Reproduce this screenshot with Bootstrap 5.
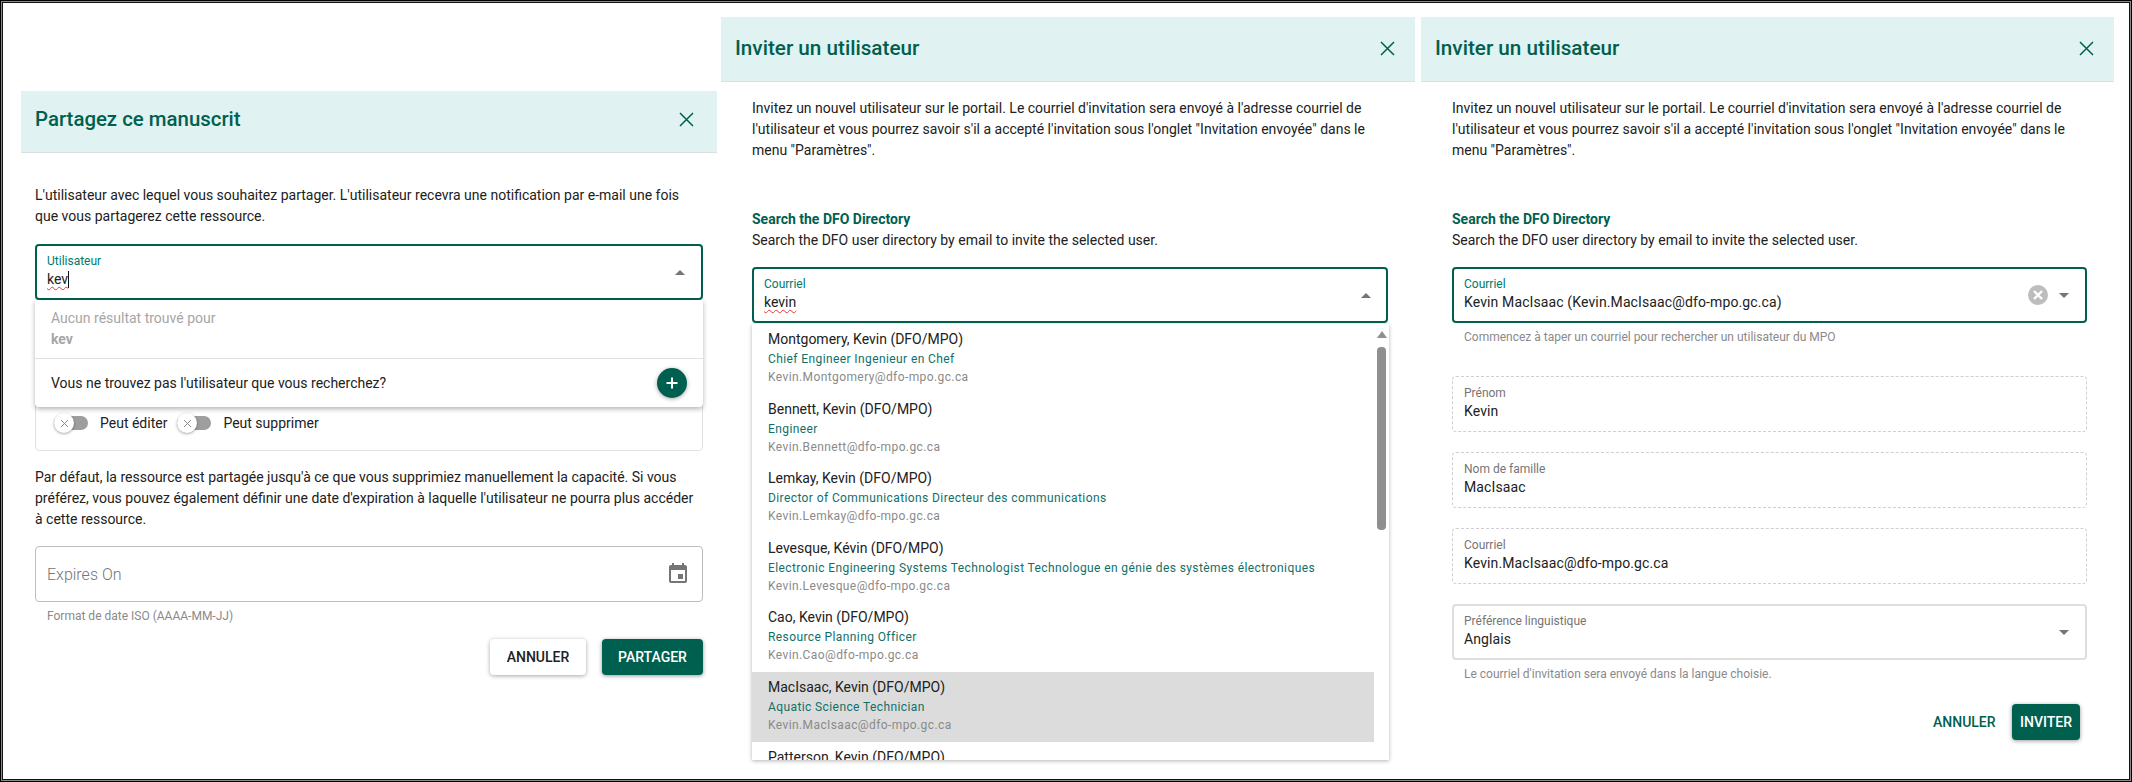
<!DOCTYPE html>
<html lang="fr">
<head>
<meta charset="utf-8">
<title>Partage et invitation</title>
<link rel="stylesheet" href="https://cdn.jsdelivr.net/npm/bootstrap@5.3.0/dist/css/bootstrap.min.css">
<style>
html,body{height:100%;}
body{margin:0;background:#fff;font-family:Roboto,"Liberation Sans",sans-serif;font-size:14px;line-height:21px;color:#212121;overflow:hidden;}
.sheet{height:782px;width:2132px;box-shadow:inset 0 0 0 1px #000,inset 0 0 0 2px #8a8a8a,inset 0 0 0 3px #111;}
.panel{flex:none;}
.panel-a{width:696px;margin:91px 0 0 21px;}
.panel-b{width:694px;margin:17px 0 0 4px;}
.panel-c{width:693px;margin:17px 0 0 6px;}
.dlg-head{background:#e0f2f1;border-bottom:1px solid #dcdfdf;color:#00604f;font-size:20.7px;line-height:24px;font-weight:500;padding:0 20px 0 14px;}
.panel-a .dlg-head{height:62px;padding:0 23px 5px 14px;font-size:20.4px;}
.panel-b .dlg-head,.panel-c .dlg-head{height:65px;padding-bottom:2px;}
.dlg-head svg{width:15px;height:15px;stroke:#00604f;stroke-width:1.5;fill:none;}
.dlg-body{padding:0 14px;position:relative;}
.panel-b .dlg-body,.panel-c .dlg-body{padding:0 27px 0 31px;}
.intro{margin:0;}
.panel-a .intro.one{padding-top:32px;margin-bottom:17px;}
.panel-b .intro.one,.panel-c .intro.one{padding-top:16px;margin-bottom:48px;}
.dir-title{color:#00604f;font-weight:700;margin:0;}
.dir-sub{margin:0 0 16px;}
.fld{height:56px;border:1px solid #bdbdbd;border-radius:4px;padding:8px 11px 0;position:relative;background:#fff;}
.fld.live{border:2px solid #00604f;padding:7px 10px 0;}
.fld.ro{border:1px dashed #cfcfcf;}
.fld.sel{border:2px solid #dedede;padding:7px 10px 0;}
.fld-label{display:block;font-size:12px;line-height:16px;color:#757575;}
.fld.live .fld-label{color:#00796b;}
.fld-value{display:block;line-height:20px;color:#212121;}
.panel-c .fld-value{letter-spacing:.12px;}
.spell{text-decoration:underline wavy #e53935 1px;text-underline-offset:2px;}
.caret-mark{display:inline-block;width:1px;height:17px;background:#111;vertical-align:-4px;}
.arrow-up,.arrow-down{width:0;height:0;border-left:5px solid transparent;border-right:5px solid transparent;}
.arrow-up{border-bottom:5px solid #757575;}
.arrow-down{border-top:5px solid #757575;}
.fld-tools{position:absolute;top:0;bottom:0;right:16px;gap:11px;}
.panel-b .fld-tools{right:15px;}
.hint{font-size:12px;line-height:16px;color:#8a8a8a;padding-left:12px;}
.rights{height:141px;border:1px solid #e0e0e0;border-radius:4px;margin-top:10px;padding:0 18px 16px;}
.tgl{width:34px;height:14px;border-radius:7px;background:#9e9e9e;position:relative;margin-right:12px;flex:none;margin-bottom:4px;}
.tgl::before{content:"";position:absolute;left:0;top:-3px;width:20px;height:20px;border-radius:50%;background:#fff;box-shadow:0 1px 3px rgba(0,0,0,.35);}
.tgl svg{position:absolute;left:5.5px;top:2.5px;width:9px;height:9px;stroke:#8a8a8a;stroke-width:1;fill:none;}
.tgl-text{margin-right:10px;}
.para-b{margin:16px 0 16px;}
.cal{position:absolute;right:12px;top:15px;width:24px;height:24px;fill:#757575;}
.hint-gap{margin-top:6px;}
.act{height:36px;border:0;border-radius:4px;font-size:14px;font-weight:500;line-height:36px;padding:0;text-transform:uppercase;}
.act-white{width:96px;background:#fff;color:#212121;box-shadow:0 1px 4px rgba(0,0,0,.35);}
.act-green{background:#00604f;color:#fff;box-shadow:0 1px 4px rgba(0,0,0,.4);}
.act-plain{background:transparent;color:#00604f;width:62px;}
.act-row-a{margin-top:15px;gap:16px;}
.act-row-c{margin-top:22px;padding-right:7px;gap:17px;}
.menu-a,.menu-b{position:absolute;background:#fff;z-index:5;box-shadow:0 2px 5px rgba(0,0,0,.3);border-radius:0 0 4px 4px;}
.menu-a{left:14px;right:14px;top:147px;height:107px;}
.menu-a-top{height:59px;padding:8px 16px 0;color:#a6a6a6;border-bottom:1px solid #e0e0e0;}
.menu-a-low{height:48px;padding:0 16px;}
.add-fab{width:30px;height:30px;border-radius:50%;background:#00604f;box-shadow:0 1px 4px rgba(0,0,0,.35);}
.add-fab svg{width:14px;height:14px;stroke:#fff;stroke-width:2;}
.menu-b{left:31px;width:637px;top:242px;height:436px;overflow:hidden;border-radius:0;box-shadow:0 1px 4px rgba(0,0,0,.3);}
.res-list{flex:1;overflow:hidden;}
.res{height:69.6px;padding:4px 16px 0;}
.res-on{background:#dcdcdc;}
.res-name{line-height:22px;color:#212121;}
.res-role{font-size:12px;line-height:18px;color:#0f706a;letter-spacing:.4px;}
.res-mail{font-size:12px;line-height:19px;color:#8a8a8a;letter-spacing:.4px;}
.bar{width:15px;background:#fff;position:relative;flex:none;}
.bar-up{position:absolute;left:2.5px;top:7px;border-left:5px solid transparent;border-right:5px solid transparent;border-bottom:7px solid #8f8f8f;}
.bar-thumb{position:absolute;left:3px;width:9px;top:23px;height:183px;border-radius:4px;background:#8f8f8f;}
.x-circle{width:20px;height:20px;}
.mb-gap{margin-bottom:20px;}
.hint-low{margin-top:6px;}
.expire-text{font-size:16px;color:#757575;font-weight:300;}
.partager{width:101px;}
.inviter{width:68px;}
.first-ro{margin-top:31px;}
</style>
</head>
<body>
<div class="sheet d-flex align-items-start">

  <section class="panel panel-a">
    <header class="dlg-head d-flex align-items-center justify-content-between">
      <span>Partagez ce manuscrit</span>
      <svg viewBox="0 0 15 15"><path d="M1 1 14 14M14 1 1 14"/></svg>
    </header>
    <div class="dlg-body">
      <p class="intro one">L'utilisateur avec lequel vous souhaitez partager. L'utilisateur recevra une notification par e-mail une fois que vous partagerez cette ressource.</p>
      <div class="fld live">
        <span class="fld-label">Utilisateur</span>
        <span class="fld-value"><span class="spell">kev</span><span class="caret-mark"></span></span>
        <div class="fld-tools d-flex align-items-center"><span class="arrow-up"></span></div>
      </div>
      <div class="menu-a">
        <div class="menu-a-top">Aucun résultat trouvé pour<br><strong>kev</strong></div>
        <div class="menu-a-low d-flex align-items-center justify-content-between">
          <span>Vous ne trouvez pas l'utilisateur que vous recherchez?</span>
          <span class="add-fab d-flex align-items-center justify-content-center"><svg viewBox="0 0 14 14"><path d="M7 1.5v11M1.5 7h11"/></svg></span>
        </div>
      </div>
      <div class="rights d-flex align-items-end">
        <span class="tgl"><svg viewBox="0 0 9 9"><path d="M1 1 8 8M8 1 1 8"/></svg></span><span class="tgl-text">Peut éditer</span>
        <span class="tgl"><svg viewBox="0 0 9 9"><path d="M1 1 8 8M8 1 1 8"/></svg></span><span>Peut supprimer</span>
      </div>
      <p class="para-b">Par défaut, la ressource est partagée jusqu'à ce que vous supprimiez manuellement la capacité. Si vous préférez, vous pouvez également définir une date d'expiration à laquelle l'utilisateur ne pourra plus accéder à cette ressource.</p>
      <div class="fld d-flex align-items-center pt-0">
        <span class="expire-text">Expires On</span>
        <svg class="cal" viewBox="0 0 24 24"><path d="M17 12h-5v5h5v-5zM16 1v2H8V1H6v2H5c-1.11 0-1.99.9-1.99 2L3 19c0 1.1.89 2 2 2h14c1.1 0 2-.9 2-2V5c0-1.1-.9-2-2-2h-1V1h-2zm3 18H5V8h14v11z"/></svg>
      </div>
      <div class="hint hint-gap">Format de date ISO (AAAA-MM-JJ)</div>
      <div class="act-row-a d-flex justify-content-end">
        <button class="act act-white" type="button">Annuler</button>
        <button class="act act-green partager" type="button">Partager</button>
      </div>
    </div>
  </section>

  <section class="panel panel-b">
    <header class="dlg-head d-flex align-items-center justify-content-between">
      <span>Inviter un utilisateur</span>
      <svg viewBox="0 0 15 15"><path d="M1 1 14 14M14 1 1 14"/></svg>
    </header>
    <div class="dlg-body">
      <p class="intro one">Invitez un nouvel utilisateur sur le portail. Le courriel d'invitation sera envoyé à l'adresse courriel de l'utilisateur et vous pourrez savoir s'il a accepté l'invitation sous l'onglet "Invitation envoyée" dans le menu "Paramètres".</p>
      <p class="dir-title">Search the DFO Directory</p>
      <p class="dir-sub">Search the DFO user directory by email to invite the selected user.</p>
      <div class="fld live">
        <span class="fld-label">Courriel</span>
        <span class="fld-value"><span class="spell">kevin</span></span>
        <div class="fld-tools d-flex align-items-center"><span class="arrow-up"></span></div>
      </div>
      <div class="menu-b d-flex">
        <div class="res-list">
          <div class="res"><div class="res-name">Montgomery, Kevin (DFO/MPO)</div><div class="res-role">Chief Engineer Ingenieur en Chef</div><div class="res-mail">Kevin.Montgomery@dfo-mpo.gc.ca</div></div>
          <div class="res"><div class="res-name">Bennett, Kevin (DFO/MPO)</div><div class="res-role">Engineer</div><div class="res-mail">Kevin.Bennett@dfo-mpo.gc.ca</div></div>
          <div class="res"><div class="res-name">Lemkay, Kevin (DFO/MPO)</div><div class="res-role">Director of Communications Directeur des communications</div><div class="res-mail">Kevin.Lemkay@dfo-mpo.gc.ca</div></div>
          <div class="res"><div class="res-name">Levesque, Kévin (DFO/MPO)</div><div class="res-role">Electronic Engineering Systems Technologist Technologue en génie des systèmes électroniques</div><div class="res-mail">Kevin.Levesque@dfo-mpo.gc.ca</div></div>
          <div class="res"><div class="res-name">Cao, Kevin (DFO/MPO)</div><div class="res-role">Resource Planning Officer</div><div class="res-mail">Kevin.Cao@dfo-mpo.gc.ca</div></div>
          <div class="res res-on"><div class="res-name">MacIsaac, Kevin (DFO/MPO)</div><div class="res-role">Aquatic Science Technician</div><div class="res-mail">Kevin.MacIsaac@dfo-mpo.gc.ca</div></div>
          <div class="res"><div class="res-name">Patterson, Kevin (DFO/MPO)</div></div>
        </div>
        <div class="bar"><span class="bar-up"></span><span class="bar-thumb"></span></div>
      </div>
    </div>
  </section>

  <section class="panel panel-c">
    <header class="dlg-head d-flex align-items-center justify-content-between">
      <span>Inviter un utilisateur</span>
      <svg viewBox="0 0 15 15"><path d="M1 1 14 14M14 1 1 14"/></svg>
    </header>
    <div class="dlg-body">
      <p class="intro one">Invitez un nouvel utilisateur sur le portail. Le courriel d'invitation sera envoyé à l'adresse courriel de l'utilisateur et vous pourrez savoir s'il a accepté l'invitation sous l'onglet "Invitation envoyée" dans le menu "Paramètres".</p>
      <p class="dir-title">Search the DFO Directory</p>
      <p class="dir-sub">Search the DFO user directory by email to invite the selected user.</p>
      <div class="fld live">
        <span class="fld-label">Courriel</span>
        <span class="fld-value">Kevin MacIsaac (Kevin.MacIsaac@dfo-mpo.gc.ca)</span>
        <div class="fld-tools d-flex align-items-center">
          <svg class="x-circle" viewBox="0 0 20 20"><circle cx="10" cy="10" r="10" fill="#bdbdbd"/><path d="M6 6l8 8M14 6l-8 8" stroke="#fff" stroke-width="2.4"/></svg>
          <span class="arrow-down"></span>
        </div>
      </div>
      <div class="hint hint-low">Commencez à taper un courriel pour rechercher un utilisateur du MPO</div>
      <div class="fld ro mb-gap first-ro">
        <span class="fld-label">Prénom</span><span class="fld-value">Kevin</span>
      </div>
      <div class="fld ro mb-gap">
        <span class="fld-label">Nom de famille</span><span class="fld-value">MacIsaac</span>
      </div>
      <div class="fld ro mb-gap">
        <span class="fld-label">Courriel</span><span class="fld-value">Kevin.MacIsaac@dfo-mpo.gc.ca</span>
      </div>
      <div class="fld sel">
        <span class="fld-label">Préférence linguistique</span><span class="fld-value">Anglais</span>
        <div class="fld-tools d-flex align-items-center"><span class="arrow-down"></span></div>
      </div>
      <div class="hint hint-low">Le courriel d'invitation sera envoyé dans la langue choisie.</div>
      <div class="act-row-c d-flex justify-content-end">
        <button class="act act-plain" type="button">Annuler</button>
        <button class="act act-green inviter" type="button">Inviter</button>
      </div>
    </div>
  </section>
</div>
<script src="https://cdn.jsdelivr.net/npm/bootstrap@5.3.0/dist/js/bootstrap.bundle.min.js"></script>
</body>
</html>
